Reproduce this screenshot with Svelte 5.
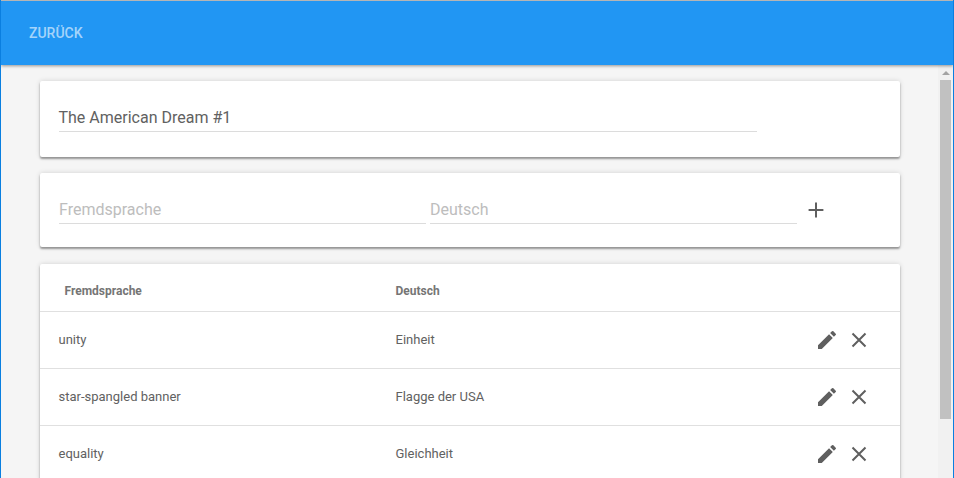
<script>
    const rows = [
        { foreign: 'unity', german: 'Einheit' },
        { foreign: 'star-spangled banner', german: 'Flagge der USA' },
        { foreign: 'equality', german: 'Gleichheit' },
    ]
</script>

<div class="window">
    <header class="toolbar">
        <button class="back">ZURÜCK</button>
    </header>

    <div class="body-row">
        <main class="content">
            <section class="card title-card">
                <div class="field title-field">The American Dream #1</div>
            </section>

            <section class="card add-card">
                <div class="field add-field placeholder">Fremdsprache</div>
                <div class="field add-field placeholder second">Deutsch</div>
                <svg class="plus" width="16" height="16" viewBox="0 0 16 16">
                    <path d="M.6 8h14.8M8 .6v14.8" stroke="#5f5f5f" stroke-width="2" fill="none" />
                </svg>
            </section>

            <section class="card table-card">
                <div class="row head">
                    <div class="col-a">Fremdsprache</div>
                    <div class="col-b">Deutsch</div>
                </div>
                {#each rows as row}
                    <div class="row">
                        <div class="col-a">{row.foreign}</div>
                        <div class="col-b">{row.german}</div>
                        <div class="actions">
                            <svg width="24" height="24" viewBox="0 0 24 24">
                                <path
                                    d="M3 17.25V21h3.75L17.81 9.94l-3.75-3.75L3 17.25zM20.71 7.04a1 1 0 0 0 0-1.41l-2.34-2.34a1 1 0 0 0-1.41 0l-1.83 1.83 3.75 3.75 1.83-1.83z"
                                    fill="#5f5f5f"
                                />
                            </svg>
                            <svg width="24" height="24" viewBox="0 0 24 24">
                                <path d="M5.5 5.5l13 13M18.5 5.5l-13 13" stroke="#5f5f5f" stroke-width="2" fill="none" />
                            </svg>
                        </div>
                    </div>
                {/each}
            </section>
        </main>

        <aside class="scrollbar">
            <div class="arrow"></div>
            <div class="thumb"></div>
        </aside>
    </div>
</div>

<style>
    :global(body) {
        margin: 0;
        font-family: Roboto, "Liberation Sans", sans-serif;
        overflow: hidden;
    }

    .window {
        width: 954px;
        height: 478px;
        box-sizing: border-box;
        border-left: 1px solid #0a7fe0;
        border-right: 1px solid #0a7fe0;
        background: #f5f5f5;
        display: flex;
        flex-direction: column;
        overflow: hidden;
    }

    .toolbar {
        height: 65px;
        flex-shrink: 0;
        box-sizing: border-box;
        border-top: 1px solid #b5b5b5;
        background: #2196f3;
        display: flex;
        align-items: center;
        padding-left: 28px;
        box-shadow: 0 1px 3px rgba(0, 0, 0, 0.4);
        position: relative;
        z-index: 1;
    }

    .back {
        background: none;
        border: none;
        padding: 0;
        color: rgba(255, 255, 255, 0.6);
        font: 500 14px Roboto, sans-serif;
    }

    .body-row {
        flex: 1;
        display: flex;
        min-height: 0;
    }

    .content {
        width: 860px;
        flex-shrink: 0;
        margin-left: 39px;
        padding-top: 16px;
        display: flex;
        flex-direction: column;
        gap: 16px;
    }

    .card {
        background: #fff;
        flex-shrink: 0;
        border-radius: 2px;
        box-shadow: 0 2px 2px rgba(0, 0, 0, 0.35), 0 0 5px rgba(0, 0, 0, 0.15);
    }

    .title-card {
        height: 76px;
        box-sizing: border-box;
        padding: 22px 0 0 19px;
    }

    .field {
        font-size: 16px;
        color: #616161;
        border-bottom: 1px solid #dcdcdc;
        height: 28px;
        line-height: 30px;
    }

    .title-field {
        width: 698px;
        text-indent: -0.5px;
    }

    .add-card {
        height: 74px;
        box-sizing: border-box;
        padding: 22px 0 0 19px;
        display: flex;
        align-items: flex-start;
    }

    .add-field {
        width: 367px;
    }

    .second {
        margin-left: 4px;
    }

    .placeholder {
        color: #bdbdbd;
    }

    .plus {
        margin: 7px 0 0 11px;
    }

    .table-card {
        flex: 1;
        margin-top: 1px;
    }

    .row {
        height: 57px;
        box-sizing: border-box;
        display: flex;
        align-items: center;
        border-top: 1px solid #e0e0e0;
        font-size: 13px;
        color: #616161;
        padding-left: 18.5px;
    }

    .row.head {
        height: 47px;
        border-top: none;
        font-size: 12px;
        font-weight: 700;
        color: #757575;
        padding: 7px 0 0 24.5px;
    }

    .col-a {
        width: 337px;
        padding-bottom: 2px;
    }

    .col-b {
        width: 348px;
        padding-bottom: 2px;
    }

    .head .col-a {
        width: 331px;
        padding-bottom: 0;
    }

    .head .col-b {
        padding-bottom: 0;
    }

    .actions {
        margin-left: 71px;
        display: flex;
        gap: 8px;
    }

    .scrollbar {
        width: 15px;
        margin-left: 38px;
        flex-shrink: 0;
        display: flex;
        flex-direction: column;
        align-items: center;
        background: #f1f1f1;
    }

    .arrow {
        width: 0;
        height: 0;
        margin: 6px 0 5px;
        border-left: 4px solid transparent;
        border-right: 4px solid transparent;
        border-bottom: 4px solid #a3a3a3;
    }

    .thumb {
        width: 11px;
        height: 339px;
        background: #c1c1c1;
    }
</style>
